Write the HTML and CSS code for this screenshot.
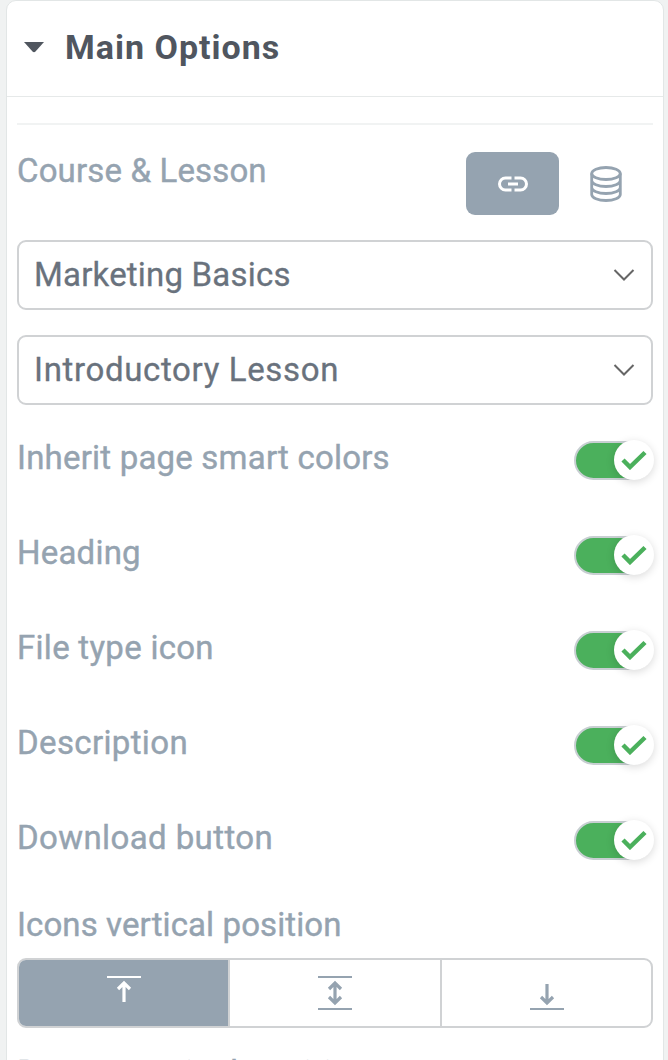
FILE: index.html
```html
<!DOCTYPE html>
<html lang="en">
<head>
	<meta charset="UTF-8">
	<title>Main Options</title>
	<link rel="stylesheet" href="styles.css">
</head>
<body>
	<div class="panel">
		<div class="panel-head">
			<svg class="caret" width="22" height="12" viewBox="0 0 22 12"><path d="M1 1h20l-8.500 9.500q-1.500 1.500-3 0z" fill="#50565f"/></svg>
			<h2>Main Options</h2>
		</div>
		<div class="panel-body">
			<div class="source">
				<span class="label w-course">Course &amp; Lesson</span>
				<button class="btn-link"><svg width="30" height="16" viewBox="0 0 30 16" fill="none" stroke="#fff" stroke-width="3"><path d="M13.500 2H7.500a6 6 0 0 0 0 12h6M16.500 2h6a6 6 0 0 1 0 12h-6M10 8h10"/></svg></button>
				<button class="btn-data"><svg width="32" height="36" viewBox="0 0 32 36" fill="none" stroke="#95a3b0" stroke-width="2.800"><ellipse cx="16" cy="7.500" rx="14.300" ry="6"/><path d="M1.700 7.500v21c0 3.300 6.400 6 14.300 6s14.300-2.700 14.300-6v-21M1.700 14.500c0 3.300 6.400 6 14.300 6s14.300-2.700 14.300-6M1.700 21.500c0 3.300 6.400 6 14.300 6s14.300-2.700 14.300-6"/></svg></button>
			</div>
			<div class="select">
				<span class="w-marketing">Marketing Basics</span>
				<svg width="22" height="14" viewBox="0 0 22 14" fill="none" stroke="#666" stroke-width="2"><path d="M1.500 2l9.500 9.500L20.500 2"/></svg>
			</div>
			<div class="select">
				<span class="w-intro">Introductory Lesson</span>
				<svg width="22" height="14" viewBox="0 0 22 14" fill="none" stroke="#666" stroke-width="2"><path d="M1.500 2l9.500 9.500L20.500 2"/></svg>
			</div>
			<ul class="options">
				<li><span class="label w-inherit">Inherit page smart colors</span><span class="switch"><span class="knob"><svg width="26" height="20" viewBox="0 0 26 20"><path d="M2 10l7 7L24 2.500" fill="none" stroke="#4bb05c" stroke-width="4.500"/></svg></span></span></li>
				<li><span class="label w-heading">Heading</span><span class="switch"><span class="knob"><svg width="26" height="20" viewBox="0 0 26 20"><path d="M2 10l7 7L24 2.500" fill="none" stroke="#4bb05c" stroke-width="4.500"/></svg></span></span></li>
				<li><span class="label w-file">File type icon</span><span class="switch"><span class="knob"><svg width="26" height="20" viewBox="0 0 26 20"><path d="M2 10l7 7L24 2.500" fill="none" stroke="#4bb05c" stroke-width="4.500"/></svg></span></span></li>
				<li><span class="label w-desc">Description</span><span class="switch"><span class="knob"><svg width="26" height="20" viewBox="0 0 26 20"><path d="M2 10l7 7L24 2.500" fill="none" stroke="#4bb05c" stroke-width="4.500"/></svg></span></span></li>
				<li><span class="label w-download">Download button</span><span class="switch"><span class="knob"><svg width="26" height="20" viewBox="0 0 26 20"><path d="M2 10l7 7L24 2.500" fill="none" stroke="#4bb05c" stroke-width="4.500"/></svg></span></span></li>
			</ul>
			<div class="label w-icons">Icons vertical position</div>
			<div class="segments">
				<button class="active"><svg width="34" height="36" viewBox="0 0 34 36" fill="none" stroke="#fff"><path d="M0 2h34" stroke-width="2"/><path d="M17 27V8M11 14l6-6 6 6" stroke-width="3.200"/></svg></button>
				<button><svg width="34" height="36" viewBox="0 0 34 36" fill="none" stroke="#95a3b0"><path d="M0 2h34M0 34h34" stroke-width="2"/><path d="M17 8v20M11 14l6-6 6 6M11 22l6 6 6-6" stroke-width="3.200"/></svg></button>
				<button><svg width="34" height="36" viewBox="0 0 34 36" fill="none" stroke="#95a3b0"><path d="M0 34h34" stroke-width="2"/><path d="M17 9v19M11 22l6 6 6-6" stroke-width="3.200"/></svg></button>
			</div>
			<div class="label next w-button">Button vertical position</div>
		</div>
	</div>
</body>
</html>
```
FILE: styles.css
```css
*{margin: 0;padding: 0;box-sizing: border-box;}
body { height: 1060px; padding: 0 4px 0 6px; background: #f0f2f2; overflow: hidden; font-family: Roboto, sans-serif; font-size: 33px; }
ul { list-style: none; }
svg { display: block; }
button { border: 0; background: none; display: flex; align-items: center; justify-content: center; }
.panel { height: 1080px; background: #fff; border: 1px solid #e2e6e6; border-radius: 10px 10px 0 0; }
.panel-head { height: 96px; padding: 0 0 3px 16px; display: flex; align-items: center; gap: 20px; border-bottom: 1px solid #e6e9e9; color: #50565f; }
.panel-head h2 { font-size: 34px; line-height: 40px; font-weight: 700; letter-spacing: 1px; }
.panel-body { margin: 26px 10px 0; border-top: 2px solid #f1f3f3; }
.label { color: #95a3b0; line-height: 40px; white-space: nowrap; -webkit-text-stroke: .4px #95a3b0; }
.source { height: 115px; padding-top: 27px; display: flex; align-items: flex-start; }
.source .label { margin-top: -1px; flex: 1; }
.btn-link { width: 93px; height: 63px; border-radius: 9px; background: #95a3b0; }
.btn-data { width: 94px; height: 63px; }
.select { height: 70px; margin-bottom: 25px; padding: 0 16px 0 15px; border: 2px solid #d0d2d4; border-radius: 9px; display: flex; align-items: center; justify-content: space-between; color: #69727d; line-height: 40px; white-space: nowrap; -webkit-text-stroke: .3px #69727d; }
.options li { height: 95px; padding-top: 8px; display: flex; align-items: flex-start; justify-content: space-between; }
.switch { width: 79px; height: 39px; margin-top: 3px; border: 2px solid #c8cfd2; border-radius: 20px; background: #4bb05c; display: flex; align-items: center; justify-content: flex-end; }
.knob { width: 40px; height: 40px; flex: none; margin: -2px -3px 0 0; border-radius: 50%; background: #fff; box-shadow: 0 2px 8px rgba(0,0,0,.15); display: flex; align-items: center; justify-content: center; }
.segments { height: 70px; margin-top: 13px; border: 2px solid #d0d2d4; border-radius: 9px; display: grid; grid-template-columns: 209px 1fr 211px; overflow: hidden; }
.segments button + button { border-left: 2px solid #d0d2d4; }
.segments .active { background: #95a3b0; }
.next { margin-top: 25px; }
.w-course { letter-spacing: .15px; }
.w-marketing { letter-spacing: .2px; }
.w-intro { letter-spacing: .65px; }
.w-inherit { letter-spacing: .2px; }
.w-heading { letter-spacing: .2px; }
.w-file { letter-spacing: .28px; }
.w-desc { letter-spacing: .36px; }
.w-download { letter-spacing: .4px; }
.w-icons { letter-spacing: .1px; }
.w-button { letter-spacing: .6px; }
```
